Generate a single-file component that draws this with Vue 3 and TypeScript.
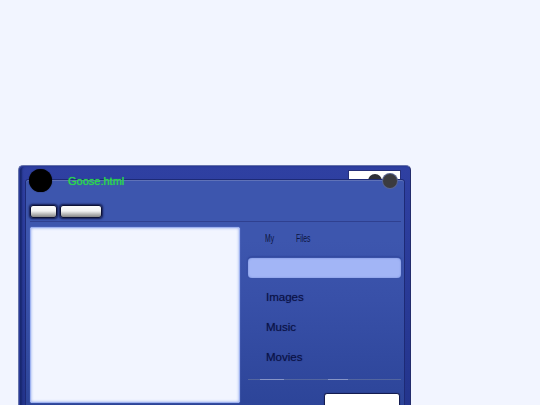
<script setup lang="ts">
const places: string[] = ['Images', 'Music', 'Movies']
</script>

<template>
  <div class="page">
    <section class="window">
      <header class="titlebar">
        <span class="orb"></span>
        <span class="title">Goose.html</span>
        <span class="title-tab"><i class="tab-dot"></i></span>
        <span class="close"></span>
      </header>
      <div class="panel">
        <div class="toolbar">
          <button class="tool tool-s"></button>
          <button class="tool tool-l"></button>
        </div>
        <div class="content">
          <div class="editor"></div>
          <aside class="side">
            <div class="crumbs"><span>My</span><span>Files</span></div>
            <div class="selected"></div>
            <ul class="list">
              <li v-for="p in places" :key="p">{{ p }}</li>
            </ul>
            <div class="rule"><i class="glint g1"></i><i class="glint g2"></i></div>
            <div class="actions"><button class="action"></button></div>
          </aside>
        </div>
      </div>
    </section>
  </div>
</template>

<style>
html, body { margin: 0; background: #f2f5ff; }
</style>

<style scoped>
.page {
  height: 405px;
  overflow: hidden;
  padding: 165px 0 0 18px;
  box-sizing: border-box;
  background: #f2f5ff;
  font-family: "Liberation Sans", Arial, sans-serif;
}
.window {
  width: 393px;
  height: 270px;
  box-sizing: border-box;
  border-radius: 5px 5px 0 0;
  background: linear-gradient(#2f40a2, #22338a);
  border: 1px solid #6673ab;
  border-bottom: 0;
  border-right-color: #232c6c;
  box-shadow: inset 1px 1px 0 #2a3a98, inset 3px 0 2px #18276f;
}
.titlebar {
  position: relative;
  height: 13px;
}
.orb {
  position: absolute;
  left: 10px;
  top: 3px;
  width: 23px;
  height: 23px;
  border-radius: 50%;
  background: #000;
  z-index: 3;
  box-shadow: 0 0 1px #111;
}
.title {
  position: absolute;
  left: 49px;
  top: 8px;
  font-size: 11px;
  line-height: 14px;
  color: #2ad84e;
  text-shadow: 0 0 1px #2ad84e;
  z-index: 3;
}
.title-tab {
  position: absolute;
  left: 329px;
  top: 4px;
  width: 53px;
  height: 16px;
  background: #fff;
  border: 1px solid #26307a;
  box-sizing: border-box;
}
.tab-dot {
  position: absolute;
  left: 19px;
  top: 3px;
  width: 14px;
  height: 14px;
  border-radius: 50%;
  background: #2e3038;
}
.close {
  position: absolute;
  left: 364px;
  top: 8px;
  width: 14px;
  height: 14px;
  border-radius: 50%;
  background: #3b3b3f;
  box-shadow: 0 0 0 1px #59648f;
  z-index: 3;
}
.panel {
  position: relative;
  margin: 0 5px 0 6px;
  height: 240px;
  box-sizing: border-box;
  border: 1px solid #1d2a76;
  border-radius: 3px 3px 0 0;
  background: linear-gradient(#3d56ae 0 60px, #3850a8 120px, #2c4498 230px);
  box-shadow: inset 0 1px 0 #5f72b8;
  padding: 0 3px 0 4px;
}
.toolbar {
  display: flex;
  gap: 3px;
  height: 42px;
  align-items: flex-start;
  padding-top: 25px;
  box-sizing: border-box;
  border-bottom: 1px solid #2f4090;
}
.tool {
  height: 13px;
  padding: 0;
  border: 1px solid #0d1236;
  border-radius: 3px;
  background: linear-gradient(#fcfcfc, #f2f2f2 45%, #858585);
  box-shadow: 0 0 2px 1px #141b4e;
}
.tool-s { width: 27px; }
.tool-l { width: 42px; }
.content {
  display: flex;
  gap: 8px;
  padding-top: 5px;
}
.editor {
  width: 210px;
  height: 176px;
  flex: none;
  box-sizing: border-box;
  background: #f2f5ff;
  border: 1px solid #9eb2f0;
  border-radius: 2px;
  box-shadow: inset 0 0 3px #8ea4ea, 0 0 1px #8ea4ea;
}
.side {
  flex: 1;
  min-width: 0;
}
.crumbs {
  display: flex;
  gap: 22px;
  padding: 6px 0 0 17px;
  height: 25px;
  box-sizing: border-box;
  font-size: 10px;
  line-height: 12px;
  color: #0b1440;
}
.crumbs span { display: inline-block; transform: scaleX(0.68); transform-origin: left; }
.crumbs span:first-child { width: 9px; }
.selected {
  height: 20px;
  margin-top: 6px;
  box-sizing: border-box;
  border-radius: 4px;
  background: #a2b5f6;
  box-shadow: inset 0 0 2px #6f86d6, 0 0 0 1px #3a52a8, 0 -1px 2px 0 #1f3080;
}
.list {
  list-style: none;
  margin: 4px 0 0;
  padding: 0;
}
.list li {
  height: 30px;
  padding-left: 18px;
  font-size: 11.5px;
  line-height: 30px;
  color: #0a1145;
  text-shadow: 0 0 1px #0a114580;
}
.rule {
  position: relative;
  height: 1px;
  margin-top: 7px;
  background: #52659f;
}
.glint {
  position: absolute;
  top: 0;
  height: 1px;
  background: #8795c6;
}
.g1 { left: 12px; width: 24px; }
.g2 { left: 80px; width: 20px; }
.actions {
  display: flex;
  justify-content: flex-end;
  padding-top: 13px;
}
.action {
  width: 76px;
  height: 24px;
  padding: 0;
  margin-right: 1px;
  border: 1px solid #141c50;
  border-radius: 3px;
  background: #fff;
  box-shadow: 0 0 1px #141c50;
}
</style>
